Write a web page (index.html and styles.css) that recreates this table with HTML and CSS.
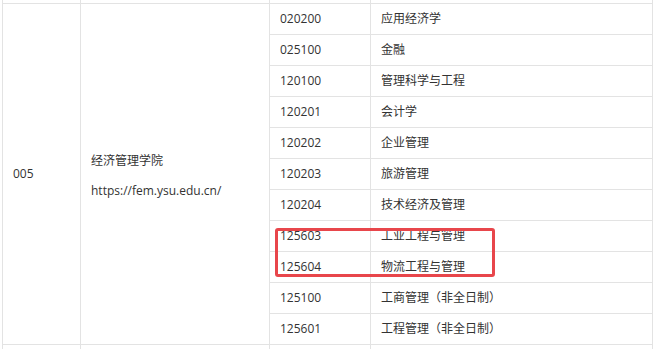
FILE: index.html
```html
<!DOCTYPE html>
<html lang="zh-CN">
<head>
<meta charset="utf-8">
<title>经济管理学院</title>
<link rel="stylesheet" href="styles.css">
</head>
<body>
<div class="viewport">
  <table class="grid">
    <colgroup>
      <col class="c1"><col class="c2"><col class="c3"><col class="c4">
    </colgroup>
    <tbody>
      <tr class="prev"><td></td><td></td><td></td><td></td></tr>
      <tr>
        <td rowspan="11" class="no">005</td>
        <td rowspan="11" class="college">
          <div class="college-name">经济管理学院</div>
          <div class="college-url">https://fem.ysu.edu.cn/</div>
        </td>
        <td>020200</td><td>应用经济学</td>
      </tr>
      <tr><td>025100</td><td>金融</td></tr>
      <tr><td>120100</td><td>管理科学与工程</td></tr>
      <tr><td>120201</td><td>会计学</td></tr>
      <tr><td>120202</td><td>企业管理</td></tr>
      <tr><td>120203</td><td>旅游管理</td></tr>
      <tr><td>120204</td><td>技术经济及管理</td></tr>
      <tr><td>125603</td><td>工业工程与管理</td></tr>
      <tr><td>125604</td><td>物流工程与管理</td></tr>
      <tr><td>125100</td><td>工商管理（非全日制）</td></tr>
      <tr><td>125601</td><td>工程管理（非全日制）</td></tr>
      <tr class="next"><td></td><td></td><td></td><td></td></tr>
    </tbody>
  </table>
  <div class="highlight"></div>
</div>
</body>
</html>
```
FILE: styles.css
```css
html, body {
  margin: 0;
  padding: 0;
  background: #ffffff;
}
.viewport {
  position: relative;
  width: 655px;
  height: 349px;
  overflow: hidden;
}
.grid {
  border-collapse: collapse;
  table-layout: fixed;
  width: 650px;
  margin-top: -28px;
  margin-left: 2px;
  font-family: "Open Sans", "Noto Sans CJK SC", sans-serif;
  font-size: 12px;
  color: #333333;
}
.c1 { width: 78px; }
.c2 { width: 189px; }
.c3 { width: 101px; }
.c4 { width: 282px; }
.grid td {
  border: 1px solid #e3e3e3;
  height: 31px;
  padding: 0 0 0 10px;
  box-sizing: border-box;
  vertical-align: middle;
  white-space: nowrap;
  line-height: 18px;
}
.grid td.college {
  padding-top: 4px;
}
.college-name {
  margin-bottom: 12px;
}
.highlight {
  position: absolute;
  left: 275px;
  top: 228px;
  width: 220px;
  height: 49px;
  box-sizing: border-box;
  border: 3px solid #e8464b;
  border-radius: 3px;
}
```
